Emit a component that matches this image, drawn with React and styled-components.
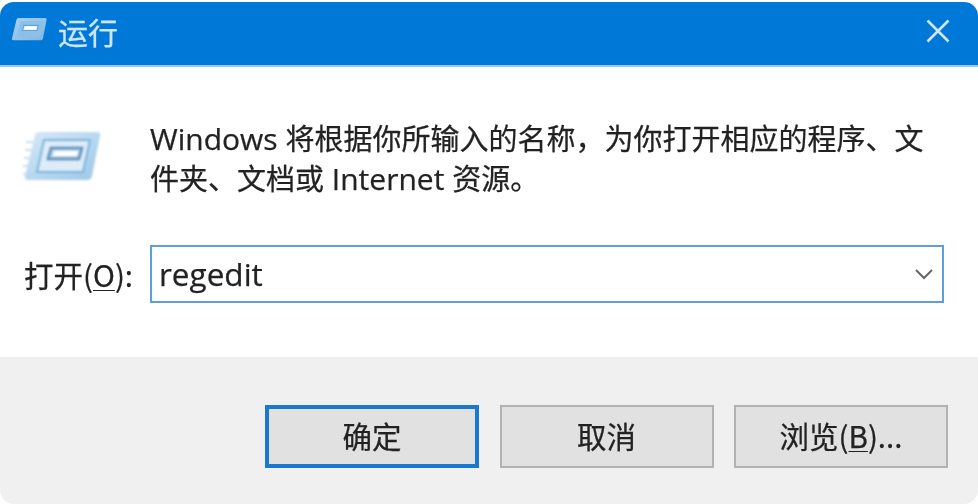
import React from "react"
import styled, { createGlobalStyle } from "styled-components"

const Global = createGlobalStyle`
  html, body {
    margin: 0;
    padding: 0;
    background: #fff;
  }
`

const Dialog = styled.div`
  box-sizing: border-box;
  width: 978px;
  height: 504px;
  padding-top: 2px;
  display: flex;
  flex-direction: column;
  overflow: hidden;
  font-family: "Noto Sans CJK SC", "Open Sans", sans-serif;
  color: #222;
  -webkit-text-stroke: 0.25px currentColor;
`

const TitleBar = styled.div`
  height: 57px;
  flex-shrink: 0;
  display: flex;
  align-items: center;
  padding: 0 28px 6px 11px;
  background: #0078d7;
  border-bottom: 2px solid #8fcdf5;
  border-radius: 14px 14px 0 0;
  color: #cfe6f7;
`

const Title = styled.div`
  margin-left: 10px;
  font-size: 30px;
  line-height: 36px;
  filter: blur(0.5px);
`

const CloseIcon = styled.svg`
  margin-left: auto;
  width: 24px;
  height: 24px;
  filter: blur(0.5px);
`

const TitleIcon = styled.svg`
  width: 37px;
  height: 28px;
  filter: blur(0.7px);
`

const Content = styled.div`
  flex: 1;
  display: flex;
  flex-direction: column;
  background: #fff;
`

const Message = styled.div`
  display: flex;
  padding: 51px 0 0 23px;
`

const MessageIcon = styled.svg`
  width: 80px;
  height: 60px;
  margin-top: 12px;
  flex-shrink: 0;
  filter: blur(0.9px);
`

const MessageText = styled.div`
  margin-left: 47px;
  font-size: 29px;
  line-height: 39px;
  white-space: nowrap;
  filter: blur(0.45px);
`

const Latin = styled.span`
  font-family: "Open Sans", sans-serif;
  font-size: 30px;
`

const OpenRow = styled.div`
  display: flex;
  align-items: center;
  margin-top: 47px;
  padding: 0 34px 0 24px;
`

const OpenLabel = styled.label`
  width: 126px;
  flex-shrink: 0;
  font-size: 29.5px;
  white-space: nowrap;
  filter: blur(0.45px);

  u {
    text-underline-offset: 3px;
    text-decoration-thickness: 1px;
  }
`

const ComboBox = styled.div`
  box-sizing: border-box;
  flex: 1;
  height: 58px;
  display: flex;
  align-items: center;
  padding: 0 8px 0 7px;
  border: 2.5px solid #5d9fd8;
  background: #fff;
`

const ComboValue = styled.div`
  font-family: "Open Sans", sans-serif;
  font-size: 31.5px;
  line-height: 36px;
  filter: blur(0.45px);
`

const ChevronIcon = styled.svg`
  margin-left: auto;
  width: 20px;
  height: 12px;
  filter: blur(0.4px);
`

const Footer = styled.div`
  box-sizing: border-box;
  height: 147px;
  flex-shrink: 0;
  display: flex;
  justify-content: flex-end;
  gap: 20.5px;
  padding: 48px 30px 0 0;
  background: #f0f0f0;
  border-radius: 0 0 14px 14px;
`

const Button = styled.button`
  box-sizing: border-box;
  width: 214px;
  height: 63px;
  padding: 0;
  border: ${props => (props.$primary ? "4px solid #1a78d0" : "2px solid #b2b2b2")};
  background: #e1e1e1;
  color: #222;
  font-family: "Noto Sans CJK SC", "Open Sans", sans-serif;
  font-size: 29.5px;

  span {
    display: block;
    margin-top: -3px;
    filter: blur(0.45px);
  }

  u {
    text-underline-offset: 3px;
    text-decoration-thickness: 1px;
  }
`

const RunGlyph = ({ as: Svg, id, tone }) => (
  <Svg viewBox="0 0 80 60">
    <defs>
      <linearGradient id={id} x1="0" y1="0" x2="1" y2="1">
        <stop offset="0" stopColor={tone.from} />
        <stop offset="1" stopColor={tone.to} />
      </linearGradient>
    </defs>
    {tone.lines && (
      <path d="M3 12h11M2 20h10M1 28h9M0 36h8M0 44h6" fill="none" stroke={tone.lines} strokeWidth="2" />
    )}
    <path d="M12 5 Q13 2 17 2 H74 Q78 2 77 6 L69 46 Q68 50 64 50 H5 Q1 50 2 46 Z" fill={`url(#${id})`} />
    <path d="M21 10 H67 L60 42 H14 Z" fill={tone.frame} stroke={tone.edge} strokeWidth="2" />
    <path d="M28 18 H59 L56 29 H25 Z" fill={tone.well} stroke={tone.wellEdge} strokeWidth="2.5" />
    <path d="M31 21 H55 L54 26 H30 Z" fill="#fff" />
  </Svg>
)

const bigTone = {
  from: "#d6e9f7",
  to: "#9cc8e8",
  lines: "#c9e0f2",
  frame: "#dcecf8",
  edge: "#7fb4dc",
  well: "#b7d6ee",
  wellEdge: "#5f8fb8",
}
const smallTone = {
  from: "#a8d0ee",
  to: "#7fb8e4",
  frame: "#8cc0e8",
  edge: "#8cc0e8",
  well: "#e4f0fa",
  wellEdge: "#5ea3dc",
}

export default function App() {
  return (
    <>
      <Global />
      <Dialog>
        <TitleBar>
          <RunGlyph as={TitleIcon} id="small-run" tone={smallTone} />
          <Title>运行</Title>
          <CloseIcon viewBox="0 0 24 24">
            <path d="M1.5 1.5 L22.5 22.5 M22.5 1.5 L1.5 22.5" stroke="#cfe6f7" strokeWidth="2.6" fill="none" />
          </CloseIcon>
        </TitleBar>
        <Content>
          <Message>
            <RunGlyph as={MessageIcon} id="big-run" tone={bigTone} />
            <MessageText>
              <Latin>Windows </Latin>将根据你所输入的名称，为你打开相应的程序、文
              <br />
              件夹、文档或<Latin> Internet </Latin>资源。
            </MessageText>
          </Message>
          <OpenRow>
            <OpenLabel>
              打开(<u>O</u>):
            </OpenLabel>
            <ComboBox>
              <ComboValue>regedit</ComboValue>
              <ChevronIcon viewBox="0 0 20 12">
                <path d="M2 2 L10 10 L18 2" stroke="#666" strokeWidth="2" fill="none" />
              </ChevronIcon>
            </ComboBox>
          </OpenRow>
        </Content>
        <Footer>
          <Button $primary>
            <span>确定</span>
          </Button>
          <Button>
            <span>取消</span>
          </Button>
          <Button>
            <span>
              浏览(<u>B</u>)...
            </span>
          </Button>
        </Footer>
      </Dialog>
    </>
  )
}
